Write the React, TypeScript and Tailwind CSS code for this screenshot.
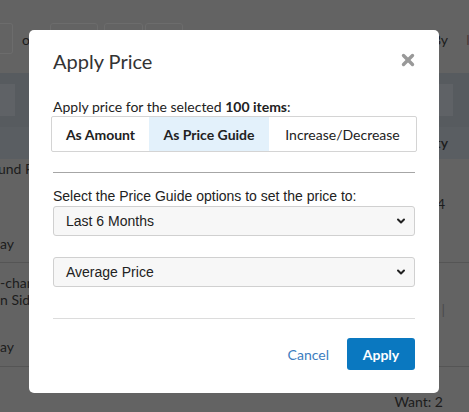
import { X, ChevronDown } from "lucide-react";

const proxima = "font-['Lato','Open_Sans',sans-serif]";
const arial = "font-['Liberation_Sans',Arial,sans-serif]";

function Backdrop() {
  return (
    <div className={`flex h-full w-full flex-col ${proxima} text-[14px] text-[#1c1c1c]`}>
      {/* toolbar */}
      <div className="flex h-[73px] items-start gap-[6px] pt-[23px]">
        <div className="h-[31px] w-[13px] rounded-r-[3px] border border-[#6c6c6c] border-l-0" />
        <span className="ml-[3px] mt-[6px] mr-[14px]">o</span>
        <div className="h-[31px] w-[48px] rounded-[3px] border border-[#6c6c6c]" />
        <div className="h-[31px] w-[39px] rounded-[3px] border border-[#6c6c6c]" />
        <div className="-ml-[4px] h-[31px] w-[38px] rounded-[3px] border border-[#6c6c6c]" />
        <span className="ml-auto mt-[6px] pr-[12px]">By</span>
        <span className="mt-[6px] w-[3px] overflow-hidden text-[#4a3a3a]">I</span>
      </div>
      {/* search band */}
      <div className="flex h-[55px] items-center justify-between bg-[#575b5f]">
        <div className="h-[32px] w-[15px] bg-[#5f6266]" />
        <div className="mr-[16px] h-[32px] w-[20px] bg-[#5f6266]" />
      </div>
      {/* column headers */}
      <div className="flex h-[32px] items-center justify-end bg-[#5a5e62] pr-[21px] font-semibold">
        <span>ty</span>
      </div>
      {/* rows */}
      <div className="flex h-[105px] justify-between border-b border-[#555]">
        <div className="flex flex-col">
          <span className="-ml-[2px] -mt-[1px]">und F</span>
          <span className="mt-[54px]">ay</span>
        </div>
        <span className="mt-[34px] pr-[24px]">4</span>
      </div>
      <div className="flex h-[105px] justify-between border-b border-[#555]">
        <div className="flex flex-col leading-[17px]">
          <span className="mt-[11px]">-chan</span>
          <span>n Side</span>
          <span className="mt-[30px]">ay</span>
        </div>
        <span className="mt-[36px] pr-[24px] text-[#4a4a4a]">|</span>
      </div>
      <div className="flex justify-end pr-[26px] pt-[24px]">
        <span>Want: 2</span>
      </div>
    </div>
  );
}

function Select({ value }: { value: string }) {
  return (
    <div
      className={`flex h-[30px] items-center justify-between rounded-[3px] border border-[#d0d0d0] bg-[#f7f7f7] pl-[12px] pr-[7px] ${arial} text-[14px] text-[#222]`}
    >
      <span>{value}</span>
      <ChevronDown size={12} strokeWidth={4} className="text-[#222]" />
    </div>
  );
}

export default function App() {
  return (
    <div className="relative h-[412px] w-[469px] overflow-hidden bg-[#636363]">
      <Backdrop />
      <div className="absolute left-[29px] top-[30px] flex h-[363px] w-[410px] flex-col rounded-[5px] bg-white px-[24px]">
        <div className="flex items-center justify-between pt-[17px]">
          <h2 className={`${proxima} text-[20px] leading-[28px] text-[#333]`}>Apply Price</h2>
          <X size={18} strokeWidth={4.5} className="mr-[-2px] -mt-[2px] text-[#999]" />
        </div>
        <p className={`mt-[24px] ${proxima} text-[14px] leading-[16px] text-[#222]`}>
          Apply price for the selected <b>100 items</b>:
        </p>
        <div
          className={`mt-[1px] -mx-[2px] flex h-[36px] rounded-[2px] border border-[#d4d4d4] ${proxima} text-[14px] text-[#222]`}
        >
          <div className="flex w-[97px] items-center justify-center font-bold">As Amount</div>
          <div className="flex w-[120px] items-center justify-center bg-[#e3f1fb] font-bold">
            As Price Guide
          </div>
          <div className="flex flex-1 items-center justify-center">Increase/Decrease</div>
        </div>
        <div className="mt-[20px] h-px bg-[#a6a6a6]" />
        <p className={`mt-[15px] ${arial} text-[14px] leading-[16px] text-[#222]`}>
          Select the Price Guide options to set the price to:
        </p>
        <div className="mt-[2px]">
          <Select value="Last 6 Months" />
        </div>
        <div className="mt-[21px]">
          <Select value="Average Price" />
        </div>
        <div className="mt-[31px] h-px bg-[#dcdcdc]" />
        <div className={`mt-[19px] flex items-center justify-end gap-[18px] ${proxima} text-[14px]`}>
          <button className="text-[#3c7dc0]">Cancel</button>
          <button className="flex h-[32px] w-[68px] items-center justify-center rounded-[3px] bg-[#0a78c0] font-bold text-white">
            Apply
          </button>
        </div>
      </div>
    </div>
  );
}
